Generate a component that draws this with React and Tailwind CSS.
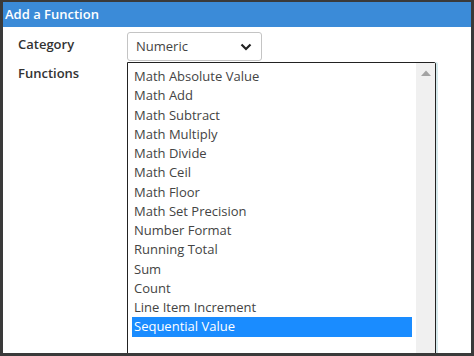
const functions = [
  'Math Absolute Value',
  'Math Add',
  'Math Subtract',
  'Math Multiply',
  'Math Divide',
  'Math Ceil',
  'Math Floor',
  'Math Set Precision',
  'Number Format',
  'Running Total',
  'Sum',
  'Count',
  'Line Item Increment',
  'Sequential Value',
]

export default function App() {
  const selected = 'Sequential Value'

  return (
    <div
      className="w-[474px] h-[356px] overflow-hidden bg-white border-t-2 border-l-[3px] border-r-[3px] border-b-[3px] border-[#3a3a3a]"
      style={{ fontFamily: '"Open Sans", "Liberation Sans", sans-serif' }}
    >
      {/* Dialog title */}
      <div className="h-[25px] bg-[#3b8bd8] text-white font-semibold text-[13px] leading-[25px] pl-[2px]">
        Add a Function
      </div>

      <div className="pt-[5px]">
        {/* Category */}
        <div className="flex items-start">
          <div className="w-[124px] pl-[15px] pt-[3px] text-[13px] font-semibold text-[#333]">Category</div>
          <div className="w-[135px] h-[29px] border border-[#c4c4c4] rounded-[3px] flex items-center justify-between pl-[8px] pr-[9px] text-[13px] text-[#444]">
            <span>Numeric</span>
            <svg width="12" height="8" viewBox="0 0 12 8">
              <polyline points="1.5,1.5 6,6 10.5,1.5" fill="none" stroke="#222" strokeWidth="2.2" />
            </svg>
          </div>
        </div>

        {/* Functions */}
        <div className="flex items-start mt-px">
          <div className="w-[124px] pl-[15px] pt-[2px] text-[13px] font-semibold text-[#333]">Functions</div>
          <div className="w-[309px] h-[300px] border border-[#222] rounded-tr-[2px] flex shadow-[2px_0_0_#d6e9ec]">
            <div className="flex-1 pt-[4px] pl-[4px] pr-[4px]">
              {functions.map((f) => (
                <div
                  key={f}
                  className={
                    'h-[19.25px] leading-[19.25px] pl-[2px] text-[13px] whitespace-nowrap ' +
                    (f === selected ? 'bg-[#1a8cff] text-white' : 'text-[#444]')
                  }
                >
                  {f}
                </div>
              ))}
            </div>
            <div className="w-[19px] bg-[#f0f0f0] flex justify-center pt-[7px]">
              <svg width="10" height="6" viewBox="0 0 10 6">
                <polygon points="0,6 5,0.5 10,6" fill="#a3a3a3" />
              </svg>
            </div>
          </div>
        </div>
      </div>
    </div>
  )
}
